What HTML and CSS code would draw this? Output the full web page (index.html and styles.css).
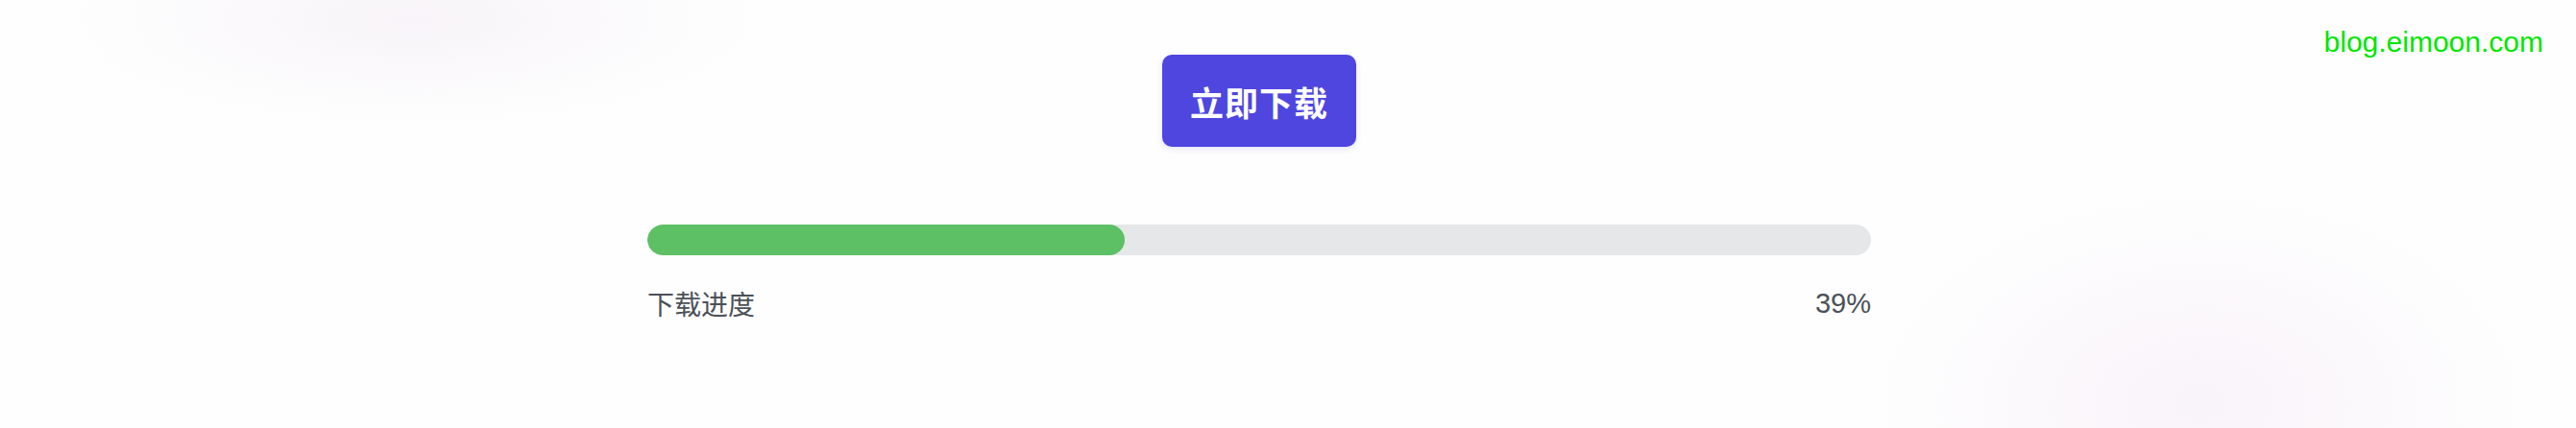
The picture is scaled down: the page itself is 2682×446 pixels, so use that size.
FILE: index.html
```html
<!DOCTYPE html>
<html lang="zh-CN">
<head>
<meta charset="utf-8">
<title>立即下载</title>
<link rel="stylesheet" href="styles.css">
</head>
<body>
<div class="page">
  <div class="watermark">blog.eimoon.com</div>
  <main class="content">
    <button class="download-btn" type="button">立即下载</button>
    <section class="progress">
      <div class="track"><div class="fill" style="width: 39%"></div></div>
      <div class="labels">
        <span class="label">下载进度</span>
        <span class="percent">39%</span>
      </div>
    </section>
  </main>
</div>
</body>
</html>
```
FILE: styles.css
```css
html, body {
  margin: 0;
  padding: 0;
  height: 100%;
}
body {
  font-family: "Liberation Sans", "Noto Sans CJK SC", sans-serif;
  background-color: #fefefe;
  background-image:
    radial-gradient(ellipse 360px 110px at 430px 20px, rgba(247, 243, 248, 0.9), rgba(255, 255, 255, 0) 100%),
    radial-gradient(ellipse 340px 220px at 2290px 420px, rgba(248, 242, 249, 0.9), rgba(255, 255, 255, 0) 100%);
  overflow: hidden;
}
.page {
  position: relative;
  box-sizing: border-box;
  width: 2682px;
  height: 446px;
  padding-right: 60px;
}
.watermark {
  position: absolute;
  top: 27px;
  right: 34px;
  font-family: "Liberation Sans", sans-serif;
  font-size: 30px;
  color: #00e600;
}
.content {
  width: 1274px;
  margin: 0 auto;
  padding-top: 57px;
  display: flex;
  flex-direction: column;
  align-items: center;
}
.download-btn {
  width: 202px;
  height: 96px;
  border: none;
  border-radius: 10px;
  background: #4f46e0;
  color: #ffffff;
  font-family: "Noto Sans CJK SC", sans-serif;
  font-weight: 700;
  font-size: 35px;
  letter-spacing: 1px;
  padding: 0;
  box-shadow: 0 2px 6px rgba(79, 70, 224, 0.15);
}
.progress {
  width: 100%;
  margin-top: 81px;
}
.track {
  height: 32px;
  border-radius: 16px;
  background: #e5e7e8;
  overflow: hidden;
}
.fill {
  height: 100%;
  border-radius: 16px;
  background: #5dc064;
}
.labels {
  display: flex;
  justify-content: space-between;
  align-items: center;
  margin-top: 30px;
  color: #4b5159;
  font-size: 28px;
  line-height: 40px;
}
.label {
  font-family: "Noto Sans CJK SC", sans-serif;
}
.percent {
  font-family: "Liberation Sans", sans-serif;
  font-size: 29px;
}
```
